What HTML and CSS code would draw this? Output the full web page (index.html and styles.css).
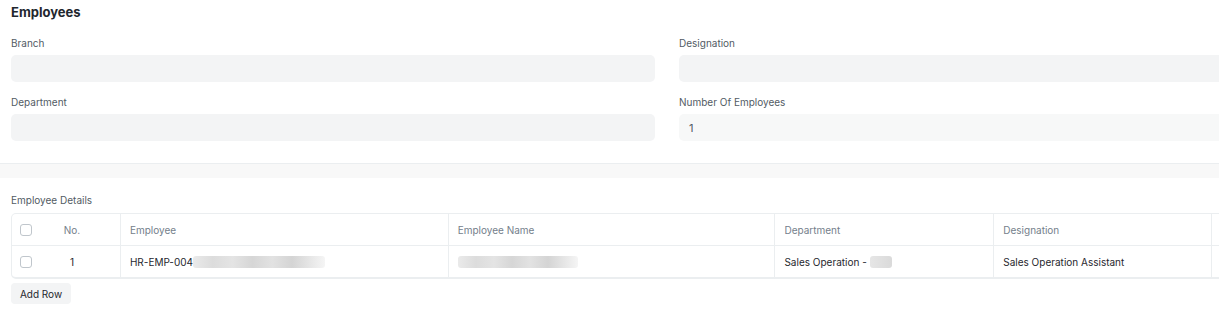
FILE: index.html
```html
<!DOCTYPE html>
<html>
<head>
<meta charset="utf-8">
<link rel="stylesheet" href="styles.css">
</head>
<body>
<div class="page">
  <section class="section">
    <h2 class="section-title">Employees</h2>
    <div class="grid">
      <div class="field">
        <label class="label">Branch</label>
        <div class="input"></div>
      </div>
      <div class="field">
        <label class="label">Designation</label>
        <div class="input"></div>
      </div>
      <div class="field">
        <label class="label">Department</label>
        <div class="input"></div>
      </div>
      <div class="field">
        <label class="label">Number Of Employees</label>
        <div class="input readonly">1</div>
      </div>
    </div>
  </section>
  <div class="divider"></div>
  <section class="section table-section">
    <div class="label">Employee Details</div>
    <div class="table">
      <div class="row head">
        <div class="cell c-idx"><span class="check"></span><span class="num">No.</span></div>
        <div class="cell c-emp">Employee</div>
        <div class="cell c-name">Employee Name</div>
        <div class="cell c-dept">Department</div>
        <div class="cell c-des">Designation</div>
        <div class="cell c-edit"></div>
      </div>
      <div class="row body">
        <div class="cell c-idx"><span class="check"></span><span class="num">1</span></div>
        <div class="cell c-emp">HR-EMP-004<span class="blur b1"></span></div>
        <div class="cell c-name"><span class="blur b2"></span></div>
        <div class="cell c-dept">Sales Operation -&nbsp;<span class="blur b3"></span></div>
        <div class="cell c-des">Sales Operation Assistant</div>
        <div class="cell c-edit"></div>
      </div>
    </div>
    <button class="btn">Add Row</button>
  </section>
</div>
</body>
</html>
```

FILE: styles.css
```css
html, body {
  margin: 0;
  padding: 0;
  background: #fff;
  overflow: hidden;
}
body {
  font-family: Inter, "Liberation Sans", sans-serif;
  color: #1f272e;
  font-size: 11px;
}
.page {
  width: 1336px;
}
.section {
  padding: 0 0 0 11px;
  width: 1312px;
}
.section-title {
  margin: 0;
  padding-top: 4px;
  font-size: 13px;
  font-weight: 700;
  line-height: 16px;
  color: #1f272e;
}
.grid {
  display: grid;
  grid-template-columns: 644px 644px;
  column-gap: 24px;
  row-gap: 13px;
  margin-top: 16px;
}
.field {
  display: flex;
  flex-direction: column;
}
.label {
  font-size: 10px;
  line-height: 14px;
  color: #525b64;
  display: block;
}
.input {
  margin-top: 5px;
  height: 27px;
  border-radius: 5px;
  background: #f3f4f5;
  display: flex;
  align-items: center;
  padding: 0 10px;
  font-size: 11px;
  color: #525b64;
}
.input.readonly {
  background: #f7f8f8;
}
.divider {
  margin-top: 22px;
  border-top: 1px solid #ebeef0;
  height: 14px;
  background: #f8f8f8;
}
.table-section {
  padding-top: 15px;
}
.table {
  margin-top: 6px;
  border: 1px solid #ebeef0;
  border-bottom-width: 2px;
  border-radius: 5px;
  overflow: hidden;
}
.row {
  display: flex;
  height: 31px;
}
.row.head {
  border-bottom: 1px solid #ebeef0;
  color: #74808b;
}
.row.body {
  height: 31px;
  color: #1f272e;
}
.cell {
  display: flex;
  align-items: center;
  padding: 0 9px;
  border-right: 1px solid #ebeef0;
  box-sizing: border-box;
  white-space: nowrap;
  font-size: 10px;
}
.c-idx { width: 109px; padding: 0 8px; }
.c-emp { width: 328px; }
.c-name { width: 327px; }
.c-dept { width: 219px; }
.c-des { width: 218px; }
.c-edit { width: 110px; border-right: none; }
.check {
  width: 12px;
  height: 12px;
  border: 1px solid #c0c6cc;
  border-radius: 3px;
  box-sizing: border-box;
  background: #fff;
}
.num {
  flex: 1;
  text-align: center;
}
.blur {
  display: inline-block;
  height: 12px;
  border-radius: 3px;
  background: linear-gradient(90deg, #eaeaea 0%, #dcdcdc 15%, #e4e4e4 30%, #d6d6d6 45%, #e2e2e2 60%, #d4d4d4 75%, #e8e8e8 90%, #f5f5f5 100%);
}
.b1 { width: 132px; }
.b2 { width: 120px; }
.b3 { width: 22px; background: linear-gradient(90deg, #e6e6e6, #dadada); }
.btn {
  margin-top: 4px;
  font-family: inherit;
  font-size: 10px;
  color: #1f272e;
  background: #f3f4f5;
  border: none;
  border-radius: 4px;
  height: 21px;
  width: 60px;
  padding: 0;
}
```
